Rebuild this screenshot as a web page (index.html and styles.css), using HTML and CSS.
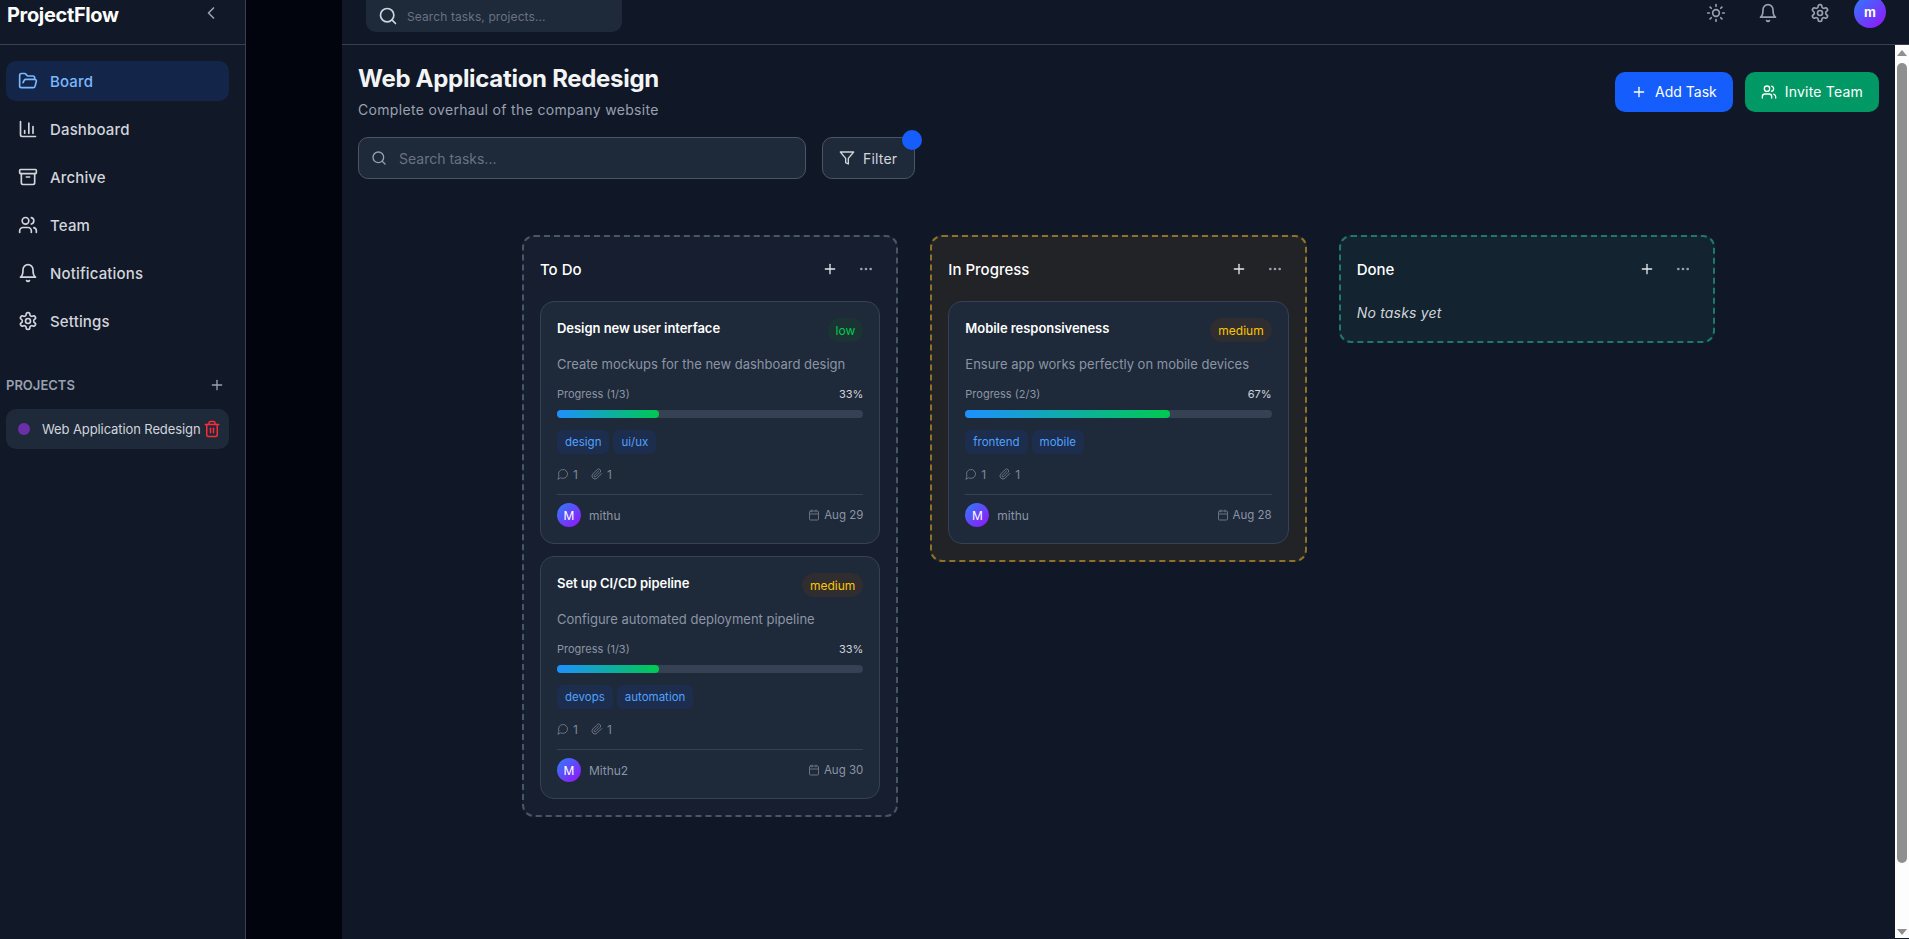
FILE: index.html
```html
<!DOCTYPE html>
<html lang="en">
  <head>
    <meta charset="UTF-8" />
    <meta name="viewport" content="width=device-width, initial-scale=1.0" />
    <link rel="stylesheet" href="styles.css">
    <title>ProjectFlow</title>
  </head>
  <body>
    <svg class="sprite" xmlns="http://www.w3.org/2000/svg">
      <symbol id="i-chevron" viewBox="0 0 24 24"><path d="m15 18-6-6 6-6"/></symbol>
      <symbol id="i-folder" viewBox="0 0 24 24"><path d="m6 14 1.5-2.9A2 2 0 0 1 9.24 10H20a2 2 0 0 1 1.94 2.5l-1.54 6a2 2 0 0 1-1.95 1.5H4a2 2 0 0 1-2-2V5a2 2 0 0 1 2-2h3.9a2 2 0 0 1 1.69.9l.81 1.2a2 2 0 0 0 1.67.9H18a2 2 0 0 1 2 2v2"/></symbol>
      <symbol id="i-chart" viewBox="0 0 24 24"><path d="M3 3v16a2 2 0 0 0 2 2h16"/><path d="M18 17V9"/><path d="M13 17V5"/><path d="M8 17v-3"/></symbol>
      <symbol id="i-archive" viewBox="0 0 24 24"><rect x="2" y="3" width="20" height="5" rx="1"/><path d="M4 8v11a2 2 0 0 0 2 2h12a2 2 0 0 0 2-2V8"/><path d="M10 12h4"/></symbol>
      <symbol id="i-users" viewBox="0 0 24 24"><path d="M16 21v-2a4 4 0 0 0-4-4H6a4 4 0 0 0-4 4v2"/><circle cx="9" cy="7" r="4"/><path d="M22 21v-2a4 4 0 0 0-3-3.87"/><path d="M16 3.13a4 4 0 0 1 0 7.75"/></symbol>
      <symbol id="i-bell" viewBox="0 0 24 24"><path d="M6 8a6 6 0 0 1 12 0c0 7 3 9 3 9H3s3-2 3-9"/><path d="M10.3 21a1.94 1.94 0 0 0 3.4 0"/></symbol>
      <symbol id="i-gear" viewBox="0 0 24 24"><path d="M12.22 2h-.44a2 2 0 0 0-2 2v.18a2 2 0 0 1-1 1.73l-.43.25a2 2 0 0 1-2 0l-.15-.08a2 2 0 0 0-2.73.73l-.22.38a2 2 0 0 0 .73 2.73l.15.1a2 2 0 0 1 1 1.72v.51a2 2 0 0 1-1 1.74l-.15.09a2 2 0 0 0-.73 2.73l.22.38a2 2 0 0 0 2.73.73l.15-.08a2 2 0 0 1 2 0l.43.25a2 2 0 0 1 1 1.73V20a2 2 0 0 0 2 2h.44a2 2 0 0 0 2-2v-.18a2 2 0 0 1 1-1.73l.43-.25a2 2 0 0 1 2 0l.15.08a2 2 0 0 0 2.73-.73l.22-.39a2 2 0 0 0-.73-2.73l-.15-.08a2 2 0 0 1-1-1.74v-.5a2 2 0 0 1 1-1.74l.15-.09a2 2 0 0 0 .73-2.73l-.22-.38a2 2 0 0 0-2.73-.73l-.15.08a2 2 0 0 1-2 0l-.43-.25a2 2 0 0 1-1-1.73V4a2 2 0 0 0-2-2z"/><circle cx="12" cy="12" r="3"/></symbol>
      <symbol id="i-sun" viewBox="0 0 24 24"><circle cx="12" cy="12" r="4"/><path d="M12 2v2"/><path d="M12 20v2"/><path d="m4.93 4.93 1.41 1.41"/><path d="m17.66 17.66 1.41 1.41"/><path d="M2 12h2"/><path d="M20 12h2"/><path d="m6.34 17.66-1.41 1.41"/><path d="m19.07 4.93-1.41 1.41"/></symbol>
      <symbol id="i-plus" viewBox="0 0 24 24"><path d="M5 12h14"/><path d="M12 5v14"/></symbol>
      <symbol id="i-dots" viewBox="0 0 24 24"><circle cx="12" cy="12" r="1"/><circle cx="19" cy="12" r="1"/><circle cx="5" cy="12" r="1"/></symbol>
      <symbol id="i-trash" viewBox="0 0 24 24"><path d="M3 6h18"/><path d="M19 6v14c0 1-1 2-2 2H7c-1 0-2-1-2-2V6"/><path d="M8 6V4c0-1 1-2 2-2h4c1 0 2 1 2 2v2"/><path d="M10 11v6"/><path d="M14 11v6"/></symbol>
      <symbol id="i-search" viewBox="0 0 24 24"><path d="m21 21-4.3-4.3"/><circle cx="11" cy="11" r="8"/></symbol>
      <symbol id="i-filter" viewBox="0 0 24 24"><polygon points="22 3 2 3 10 12.46 10 19 14 21 14 12.46 22 3"/></symbol>
      <symbol id="i-chat" viewBox="0 0 24 24"><path d="M7.9 20A9 9 0 1 0 4 16.1L2 22Z"/></symbol>
      <symbol id="i-clip" viewBox="0 0 24 24"><path d="m21.44 11.05-9.19 9.19a6 6 0 0 1-8.49-8.49l8.57-8.57A4 4 0 1 1 18 8.84l-8.59 8.57a2 2 0 0 1-2.83-2.83l8.49-8.48"/></symbol>
      <symbol id="i-calendar" viewBox="0 0 24 24"><path d="M8 2v4"/><path d="M16 2v4"/><rect x="3" y="4" width="18" height="18" rx="2"/><path d="M3 10h18"/></symbol>
    </svg>

    <aside class="sidebar">
      <div class="side-head">
        <span class="logo">ProjectFlow</span>
        <svg class="icon collapse"><use href="#i-chevron"/></svg>
      </div>
      <nav class="nav">
        <a class="nav-item active"><svg class="icon"><use href="#i-folder"/></svg>Board</a>
        <a class="nav-item"><svg class="icon"><use href="#i-chart"/></svg>Dashboard</a>
        <a class="nav-item"><svg class="icon"><use href="#i-archive"/></svg>Archive</a>
        <a class="nav-item"><svg class="icon"><use href="#i-users"/></svg>Team</a>
        <a class="nav-item"><svg class="icon"><use href="#i-bell"/></svg>Notifications</a>
        <a class="nav-item"><svg class="icon"><use href="#i-gear"/></svg>Settings</a>
      </nav>
      <div class="projects-head">
        <span>PROJECTS</span>
        <svg class="icon small"><use href="#i-plus"/></svg>
      </div>
      <div class="project-item">
        <span class="project-dot"></span>
        <span class="project-name">Web Application Redesign</span>
        <svg class="icon trash"><use href="#i-trash"/></svg>
      </div>
    </aside>

    <div class="gutter"></div>

    <div class="main">
      <header class="topbar">
        <div class="top-search">
          <svg class="icon"><use href="#i-search"/></svg>
          <span>Search tasks, projects...</span>
        </div>
        <div class="top-actions">
          <span class="top-btn"><svg class="icon"><use href="#i-sun"/></svg></span>
          <span class="top-btn"><svg class="icon"><use href="#i-bell"/></svg></span>
          <span class="top-btn"><svg class="icon"><use href="#i-gear"/></svg></span>
          <span class="user-avatar">m</span>
        </div>
      </header>

      <div class="scroll-area">
        <main class="content">
          <div class="page-head">
            <div>
              <h1>Web Application Redesign</h1>
              <p>Complete overhaul of the company website</p>
            </div>
            <div class="head-buttons">
              <button class="btn btn-blue"><svg class="icon small"><use href="#i-plus"/></svg>Add Task</button>
              <button class="btn btn-green"><svg class="icon small"><use href="#i-users"/></svg>Invite Team</button>
            </div>
          </div>

          <div class="toolbar">
            <div class="task-search">
              <svg class="icon small"><use href="#i-search"/></svg>
              <span>Search tasks...</span>
            </div>
            <button class="filter-btn">
              <svg class="icon small"><use href="#i-filter"/></svg>Filter
              <span class="filter-badge"></span>
            </button>
          </div>

          <div class="board">
            <section class="column col-todo">
              <div class="col-head">
                <h3>To Do</h3>
                <div class="col-actions">
                  <span class="col-btn"><svg class="icon small"><use href="#i-plus"/></svg></span>
                  <span class="col-btn dim"><svg class="icon small"><use href="#i-dots"/></svg></span>
                </div>
              </div>
              <div class="cards">
                <article class="card">
                  <div class="card-top">
                    <h4>Design new user interface</h4>
                    <span class="pill pill-low">low</span>
                  </div>
                  <p class="card-desc">Create mockups for the new dashboard design</p>
                  <div class="progress-row"><span>Progress (1/3)</span><b>33%</b></div>
                  <div class="bar"><div class="bar-fill" style="width: 33.33%"></div></div>
                  <div class="tags"><span class="tag">design</span><span class="tag">ui/ux</span></div>
                  <div class="meta">
                    <span><svg class="icon tiny"><use href="#i-chat"/></svg>1</span>
                    <span><svg class="icon tiny"><use href="#i-clip"/></svg>1</span>
                  </div>
                  <div class="card-foot">
                    <span class="assignee"><span class="avatar">M</span>mithu</span>
                    <span class="due"><svg class="icon tiny"><use href="#i-calendar"/></svg>Aug 29</span>
                  </div>
                </article>
                <article class="card">
                  <div class="card-top">
                    <h4>Set up CI/CD pipeline</h4>
                    <span class="pill pill-medium">medium</span>
                  </div>
                  <p class="card-desc">Configure automated deployment pipeline</p>
                  <div class="progress-row"><span>Progress (1/3)</span><b>33%</b></div>
                  <div class="bar"><div class="bar-fill" style="width: 33.33%"></div></div>
                  <div class="tags"><span class="tag">devops</span><span class="tag">automation</span></div>
                  <div class="meta">
                    <span><svg class="icon tiny"><use href="#i-chat"/></svg>1</span>
                    <span><svg class="icon tiny"><use href="#i-clip"/></svg>1</span>
                  </div>
                  <div class="card-foot">
                    <span class="assignee"><span class="avatar">M</span>Mithu2</span>
                    <span class="due"><svg class="icon tiny"><use href="#i-calendar"/></svg>Aug 30</span>
                  </div>
                </article>
              </div>
            </section>

            <section class="column col-progress">
              <div class="col-head">
                <h3>In Progress</h3>
                <div class="col-actions">
                  <span class="col-btn"><svg class="icon small"><use href="#i-plus"/></svg></span>
                  <span class="col-btn dim"><svg class="icon small"><use href="#i-dots"/></svg></span>
                </div>
              </div>
              <div class="cards">
                <article class="card">
                  <div class="card-top">
                    <h4>Mobile responsiveness</h4>
                    <span class="pill pill-medium">medium</span>
                  </div>
                  <p class="card-desc">Ensure app works perfectly on mobile devices</p>
                  <div class="progress-row"><span>Progress (2/3)</span><b>67%</b></div>
                  <div class="bar"><div class="bar-fill" style="width: 66.67%"></div></div>
                  <div class="tags"><span class="tag">frontend</span><span class="tag">mobile</span></div>
                  <div class="meta">
                    <span><svg class="icon tiny"><use href="#i-chat"/></svg>1</span>
                    <span><svg class="icon tiny"><use href="#i-clip"/></svg>1</span>
                  </div>
                  <div class="card-foot">
                    <span class="assignee"><span class="avatar">M</span>mithu</span>
                    <span class="due"><svg class="icon tiny"><use href="#i-calendar"/></svg>Aug 28</span>
                  </div>
                </article>
              </div>
            </section>

            <section class="column col-done">
              <div class="col-head">
                <h3>Done</h3>
                <div class="col-actions">
                  <span class="col-btn"><svg class="icon small"><use href="#i-plus"/></svg></span>
                  <span class="col-btn dim"><svg class="icon small"><use href="#i-dots"/></svg></span>
                </div>
              </div>
              <p class="empty">No tasks yet</p>
            </section>
          </div>
        </main>

        <div class="scrollbar">
          <span class="arrow-up"></span>
          <span class="thumb"></span>
          <span class="arrow-down"></span>
        </div>
      </div>
    </div>
  </body>
</html>
```

FILE: styles.css
```css
* {
  box-sizing: border-box;
}

body {
  margin: 0;
  height: 939px;
  overflow: hidden;
  display: flex;
  font-family: Inter, "Noto Sans", sans-serif;
  background-color: #01040c;
  color: #e5e7eb;
}

.sprite {
  display: none;
}

.icon {
  width: 20px;
  height: 20px;
  flex: none;
  fill: none;
  stroke: currentColor;
  stroke-width: 2;
  stroke-linecap: round;
  stroke-linejoin: round;
}

.icon.small {
  width: 16px;
  height: 16px;
}

.icon.tiny {
  width: 12px;
  height: 12px;
}

/* sidebar */
.sidebar {
  width: 246px;
  flex: none;
  background-color: #111827;
  border-right: 1px solid #364153;
}

.side-head {
  height: 45px;
  padding: 0 6px 0 7px;
  display: flex;
  justify-content: space-between;
  border-bottom: 1px solid #364153;
}

.logo {
  font-size: 20px;
  font-weight: 700;
  line-height: 30px;
  letter-spacing: -0.35px;
  color: #fff;
}

.collapse {
  margin: 3px 18px 0 0;
  color: #99a1af;
}

.nav {
  padding: 16px 16px 0 6px;
  display: flex;
  flex-direction: column;
  gap: 8px;
}

.nav-item {
  height: 40px;
  padding: 0 12px;
  display: flex;
  align-items: center;
  gap: 12px;
  border-radius: 10px;
  font-size: 15px;
  font-weight: 500;
  letter-spacing: 0.15px;
  color: #d1d5dc;
}

.nav-item.active {
  background-color: #13264a;
  color: #7ab8ff;
}

.projects-head {
  margin-top: 32px;
  padding: 0 20px 0 6px;
  height: 24px;
  display: flex;
  align-items: center;
  justify-content: space-between;
  font-size: 13px;
  font-weight: 600;
  color: #99a1af;
}

.project-item {
  margin: 12px 16px 0 6px;
  height: 40px;
  padding: 0 8px 0 12px;
  display: flex;
  align-items: center;
  border-radius: 10px;
  background-color: #1e2939;
  font-size: 13px;
  letter-spacing: -0.1px;
  color: #d1d5dc;
}

.project-dot {
  width: 12px;
  height: 12px;
  margin-right: 12px;
  border-radius: 50%;
  background-color: #6b2fa8;
}

.project-name {
  flex: 1;
  white-space: nowrap;
}

.trash {
  width: 18px;
  height: 18px;
  color: #fb2c36;
}

.gutter {
  width: 96px;
  flex: none;
}

/* main column */
.main {
  flex: 1;
  min-width: 0;
  display: flex;
  flex-direction: column;
  background-color: #101828;
}

.topbar {
  height: 45px;
  flex: none;
  padding: 0 23px 0 24px;
  display: flex;
  align-items: flex-start;
  justify-content: space-between;
  border-bottom: 1px solid #364153;
}

.top-search {
  width: 256px;
  height: 32px;
  padding: 0 12px;
  display: flex;
  align-items: center;
  gap: 9px;
  border-radius: 0 0 10px 10px;
  background-color: #1e2939;
  font-size: 12px;
  letter-spacing: 0.1px;
  color: #6a7282;
}

.top-search .icon {
  color: #d1d5dc;
}

.top-actions {
  display: flex;
  align-items: center;
  gap: 16px;
  height: 26px;
}

.top-btn {
  width: 36px;
  display: flex;
  justify-content: center;
  color: #99a1af;
}

.user-avatar {
  width: 32px;
  height: 32px;
  margin-top: -3px;
  display: flex;
  align-items: center;
  justify-content: center;
  border-radius: 50%;
  background: linear-gradient(135deg, #2b7fff, #9810fa);
  font-size: 13px;
  font-weight: 700;
  color: #fff;
}

.scroll-area {
  flex: 1;
  min-height: 0;
  display: flex;
}

.content {
  flex: 1;
  min-width: 0;
  padding: 18px 16px 0;
}

.page-head {
  display: flex;
  align-items: center;
  justify-content: space-between;
}

h1 {
  margin: 0;
  font-size: 24px;
  line-height: 32px;
  font-weight: 700;
  letter-spacing: -0.3px;
  color: #f3f4f6;
}

.page-head p {
  margin: 5px 0 0;
  font-size: 14px;
  line-height: 20px;
  letter-spacing: 0.33px;
  color: #99a1af;
}

.head-buttons {
  display: flex;
  gap: 12px;
}

.btn {
  height: 40px;
  padding: 0 16px;
  display: flex;
  align-items: center;
  gap: 8px;
  border: 0;
  border-radius: 10px;
  font-family: inherit;
  font-size: 14px;
  color: #fff;
}

.btn-blue {
  background-color: #155dfc;
}

.btn-green {
  letter-spacing: 0.2px;
  background-color: #009966;
}

.toolbar {
  margin-top: 17px;
  display: flex;
  gap: 16px;
}

.task-search {
  width: 448px;
  height: 42px;
  padding: 0 12px;
  display: flex;
  align-items: center;
  gap: 12px;
  border: 1px solid #4a5565;
  border-radius: 10px;
  background-color: #1e2939;
  font-size: 14px;
  color: #6a7282;
}

.task-search .icon {
  color: #99a1af;
}

.filter-btn {
  position: relative;
  width: 93px;
  height: 42px;
  padding: 0 16px;
  display: flex;
  align-items: center;
  gap: 8px;
  border: 1px solid #4a5565;
  border-radius: 10px;
  background-color: #1e2939;
  font-family: inherit;
  font-size: 14px;
  letter-spacing: 0.2px;
  color: #d1d5dc;
}

.filter-badge {
  position: absolute;
  top: -8px;
  right: -8px;
  width: 20px;
  height: 20px;
  border-radius: 50%;
  background-color: #155dfc;
}

/* board */
.board {
  margin-top: 56px;
  display: flex;
  justify-content: center;
  align-items: flex-start;
  gap: 32px;
}

.column {
  width: 376.33px;
  flex: none;
  padding: 16px;
  border: 2px dashed;
  border-radius: 12px;
}

.col-todo {
  background-color: #161e2f;
  border-color: #4a5565;
}

.col-progress {
  background-color: #212327;
  border-color: #8f7228;
}

.col-done {
  background-color: #13232f;
  border-color: #1e7a66;
}

.col-head {
  height: 32px;
  margin-bottom: 16px;
  display: flex;
  align-items: center;
  justify-content: space-between;
}

h3 {
  margin: 0;
  font-size: 15px;
  font-weight: 500;
  color: #fff;
}

.col-actions {
  display: flex;
  gap: 4px;
  margin-right: -2px;
}

.col-btn {
  width: 32px;
  height: 32px;
  display: flex;
  align-items: center;
  justify-content: center;
  color: #e5e7eb;
}

.col-btn.dim {
  color: #99a1af;
}

.empty {
  margin: 0;
  font-size: 14px;
  line-height: 24px;
  font-style: italic;
  letter-spacing: 0.2px;
  color: #d1d5dc;
}

.cards {
  display: flex;
  flex-direction: column;
  gap: 12px;
}

.card {
  padding: 16px;
  border: 1px solid #364153;
  border-radius: 14px;
  background-color: #1e2939;
}

.card-top {
  height: 24px;
  display: flex;
  justify-content: space-between;
}

h4 {
  margin: 0;
  font-size: 13px;
  line-height: 20px;
  font-weight: 600;
  letter-spacing: -0.05px;
  color: #fff;
}

.pill {
  height: 24px;
  padding: 0 8px;
  display: flex;
  align-items: center;
  border-radius: 12px;
  font-size: 12px;
}

.pill-low {
  background-color: #1c3334;
  color: #00c950;
}

.pill-medium {
  background-color: #2f2d2f;
  color: #fdc700;
}

.card-desc {
  margin: 12px 0 0;
  font-size: 13px;
  line-height: 20px;
  color: #8b95a5;
}

.progress-row {
  margin-top: 12px;
  height: 16px;
  display: flex;
  justify-content: space-between;
  align-items: center;
  font-size: 11px;
  color: #8b95a5;
}

.progress-row b {
  font-weight: 400;
  color: #d1d5dc;
}

.bar {
  margin-top: 8px;
  height: 8px;
  border-radius: 4px;
  background-color: #364153;
}

.bar-fill {
  height: 8px;
  border-radius: 4px;
  background: linear-gradient(90deg, #1e90ff, #00c950);
}

.tags {
  margin-top: 12px;
  display: flex;
  gap: 4px;
}

.tag {
  height: 24px;
  padding: 0 8px;
  display: flex;
  align-items: center;
  border-radius: 6px;
  background-color: #1c2d4d;
  font-size: 11.5px;
  color: #51a2ff;
}

.meta {
  margin-top: 12px;
  height: 16px;
  display: flex;
  gap: 13px;
  font-size: 12px;
  color: #7f8896;
}

.meta span {
  display: flex;
  align-items: center;
  gap: 4px;
}

.meta .icon,
.due .icon {
  color: #6a7282;
}

.due {
  display: flex;
  align-items: center;
  gap: 4px;
  font-size: 11.5px;
}

.card-foot {
  margin-top: 12px;
  padding-top: 8px;
  display: flex;
  align-items: center;
  justify-content: space-between;
  border-top: 1px solid #364153;
  font-size: 12px;
  color: #8b95a5;
}

.assignee {
  display: flex;
  align-items: center;
  gap: 8px;
}

.avatar {
  width: 24px;
  height: 24px;
  display: flex;
  align-items: center;
  justify-content: center;
  border-radius: 50%;
  background: linear-gradient(135deg, #2b7fff, #9810fa);
  color: #fff;
}

/* page scrollbar */
.scrollbar {
  width: 14px;
  flex: none;
  display: flex;
  flex-direction: column;
  align-items: center;
  background-color: #fdfdfd;
  margin-bottom: 1px;
}

.arrow-up,
.arrow-down {
  width: 0;
  height: 0;
  margin-top: 5px;
  border-left: 5px solid transparent;
  border-right: 5px solid transparent;
}

.arrow-up {
  border-bottom: 6px solid #8f8f8f;
}

.arrow-down {
  margin-top: 66px;
  border-top: 6px solid #8f8f8f;
}

.thumb {
  width: 10px;
  height: 800px;
  margin-top: 7px;
  border-radius: 5px;
  background-color: #8f8f8f;
}
```
